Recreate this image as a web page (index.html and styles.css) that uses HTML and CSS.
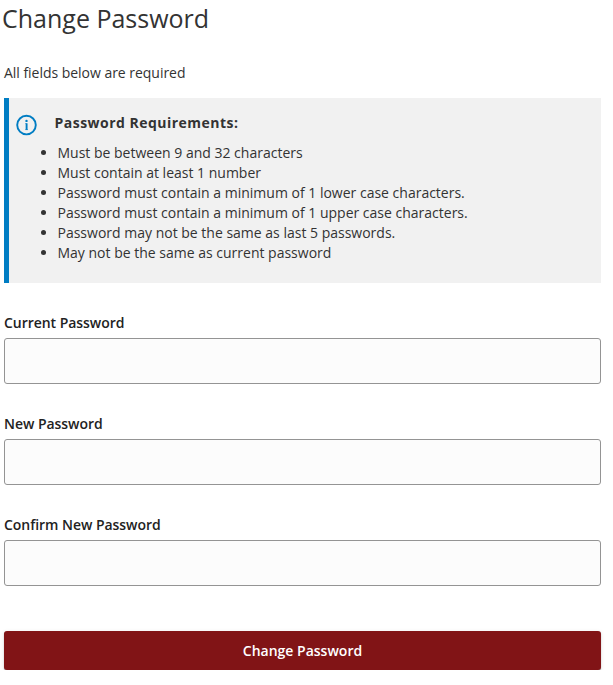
FILE: index.html
```html
<!DOCTYPE html>
<html lang="en">
<head>
  <meta charset="UTF-8" />
  <meta name="viewport" content="width=device-width, initial-scale=1.0"/>
  <title>Change Password</title>
  <link rel="stylesheet" href="styles.css">
</head>
<body>
  <h1>Change Password</h1>
  <p class="intro">All fields below are required</p>

  <div class="notice">
    <svg class="info-icon" width="22" height="22" viewBox="0 0 22 22">
      <circle cx="10.5" cy="11.1" r="9.3" fill="none" stroke="#007dc3" stroke-width="1.9"/>
      <circle cx="10.5" cy="6.9" r="1.2" fill="#007dc3"/>
      <path d="M10.6 9.3v6.6" fill="none" stroke="#007dc3" stroke-width="1.9"/>
      <path d="M9.2 9.6h1.6M9.2 15.6h2.8" fill="none" stroke="#007dc3" stroke-width="0.6"/>
    </svg>
    <div class="notice-body">
      <h2>Password Requirements:</h2>
      <ul>
        <li>Must be between 9 and 32 characters</li>
        <li>Must contain at least 1 number</li>
        <li>Password must contain a minimum of 1 lower case characters.</li>
        <li>Password must contain a minimum of 1 upper case characters.</li>
        <li>Password may not be the same as last 5 passwords.</li>
        <li>May not be the same as current password</li>
      </ul>
    </div>
  </div>

  <form>
    <div class="field">
      <label for="current">Current Password</label>
      <input type="password" id="current">
    </div>
    <div class="field">
      <label for="new">New Password</label>
      <input type="password" id="new">
    </div>
    <div class="field">
      <label for="confirm">Confirm New Password</label>
      <input type="password" id="confirm">
    </div>
    <button type="submit" class="submit-btn">Change Password</button>
  </form>
</body>
</html>
```

FILE: styles.css
```css
* {
  box-sizing: border-box;
}

body {
  margin: 0;
  padding: 0 12px 0 4px;
  font-family: "Open Sans", sans-serif;
  font-size: 14px;
  line-height: 20px;
  color: #333;
  background: #fff;
}

h1 {
  margin: 0 0 0 -2px;
  font-size: 25px;
  font-weight: 400;
  line-height: 36px;
}

.intro {
  margin: 27px 0 15px;
  letter-spacing: -0.03px;
}

.notice {
  display: flex;
  height: 185px;
  padding: 15px 0 0 7px;
  border-left: 5px solid #007dc3;
  background: #f1f1f1;
}

.info-icon {
  flex: none;
  margin-top: 1px;
}

.notice-body {
  padding-left: 16.5px;
}

.notice h2 {
  margin: 0 0 10px;
  font-size: 14px;
  font-weight: 700;
  line-height: 20px;
  letter-spacing: 0.48px;
}

.notice ul {
  margin: 0;
  padding-left: 3px;
}

.field {
  padding-top: 30px;
  margin-bottom: 25px;
}

.field + .field {
  padding-top: 5px;
}

label {
  display: block;
  margin-bottom: 5px;
  color: #222;
  font-weight: 600;
  letter-spacing: -0.04px;
}

input {
  display: block;
  width: 100%;
  height: 46px;
  border: 1px solid #949494;
  border-radius: 3px;
  background: #fcfcfc;
}

.submit-btn {
  display: block;
  width: 100%;
  height: 39px;
  margin-top: 45px;
  border: none;
  border-radius: 3px;
  background: #811416;
  box-shadow: 0 1px 1px rgba(0, 0, 0, 0.35), 0 1px 4px rgba(0, 0, 0, 0.1);
  color: #fff;
  font-family: inherit;
  font-size: 14px;
  font-weight: 600;
}
```
